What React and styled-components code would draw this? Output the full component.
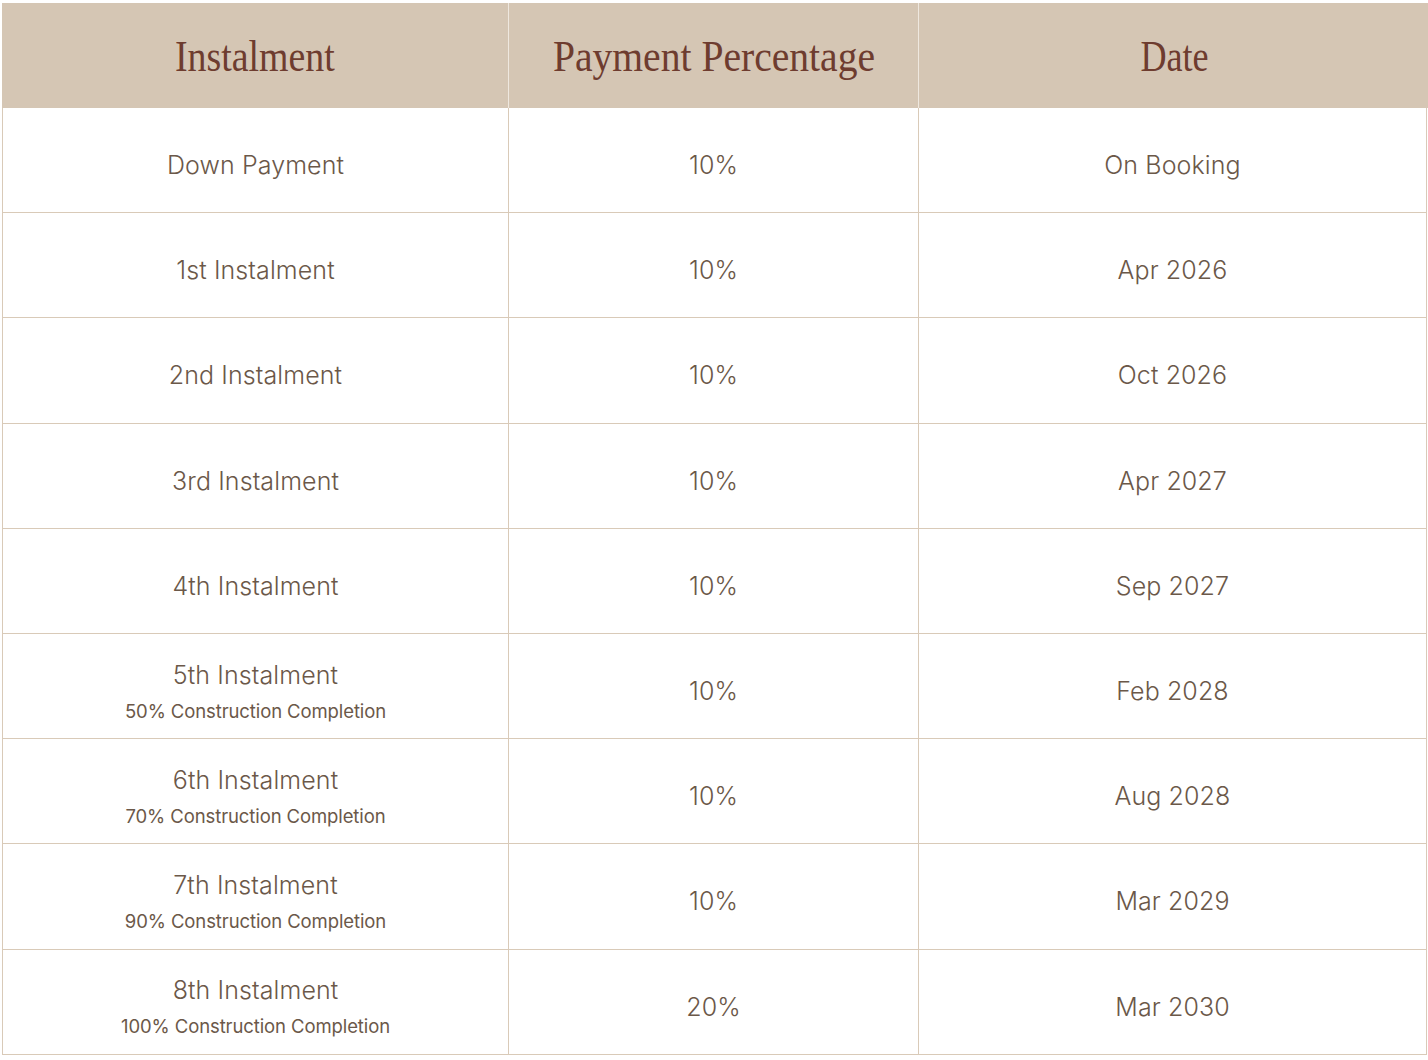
import React from "react";
import styled, { createGlobalStyle } from "styled-components";

const Global = createGlobalStyle`
  html, body { margin: 0; padding: 0; background: #ffffff; }
  body { font-family: Inter, "Noto Sans", sans-serif; }
`;

const Page = styled.div`
  padding: 3px 0 0 2px;
`;

const Table = styled.div`
  display: grid;
  grid-template-columns: 507px 410px 508px;
  width: 1425px;
`;

const HeadCell = styled.div`
  height: 105px;
  background: #d5c6b4;
  display: flex;
  align-items: center;
  justify-content: center;
  box-sizing: border-box;
  border-right: ${(p) => (p.$last ? "none" : "1px solid #efe8df")};
  ${(p) => p.$last && "margin-right: -3px;"}
`;

const HeadText = styled.span`
  display: inline-block;
  font-family: "Liberation Serif", "DejaVu Serif", serif;
  font-size: 44px;
  color: #6e3c2f;
  transform: scaleX(${(p) => p.$sx || 0.86});
  white-space: nowrap;
  margin-top: 2px;
`;

const Cell = styled.div`
  height: 105.2px;
  box-sizing: border-box;
  border-bottom: 1px solid #d9cab8;
  border-right: 1px solid #d9cab8;
  ${(p) => p.$first && "border-left: 1px solid #d9cab8;"}
  display: flex;
  flex-direction: column;
  align-items: center;
  justify-content: center;
  color: #6b5849;
  padding-top: 10px;
`;

const Main = styled.div`
  font-size: 25px;
  font-weight: 300;
  line-height: 30px;
  letter-spacing: 0.1px;
`;

const Sub = styled.div`
  font-size: 18.5px;
  font-weight: 400;
  line-height: 24px;
  margin-top: 9px;
  letter-spacing: -0.1px;
`;

const rows = [
  ["Down Payment", null, "10%", "On Booking"],
  ["1st Instalment", null, "10%", "Apr 2026"],
  ["2nd Instalment", null, "10%", "Oct 2026"],
  ["3rd Instalment", null, "10%", "Apr 2027"],
  ["4th Instalment", null, "10%", "Sep 2027"],
  ["5th Instalment", "50% Construction Completion", "10%", "Feb 2028"],
  ["6th Instalment", "70% Construction Completion", "10%", "Aug 2028"],
  ["7th Instalment", "90% Construction Completion", "10%", "Mar 2029"],
  ["8th Instalment", "100% Construction Completion", "20%", "Mar 2030"],
];

export default function App() {
  return (
    <Page>
      <Global />
      <Table>
        <HeadCell><HeadText $sx={0.86}>Instalment</HeadText></HeadCell>
        <HeadCell><HeadText $sx={0.9}>Payment Percentage</HeadText></HeadCell>
        <HeadCell $last><HeadText $sx={0.82}>Date</HeadText></HeadCell>
        {rows.map(([name, sub, pct, date]) => (
          <React.Fragment key={name}>
            <Cell $first>
              <Main>{name}</Main>
              {sub && <Sub>{sub}</Sub>}
            </Cell>
            <Cell><Main>{pct}</Main></Cell>
            <Cell><Main>{date}</Main></Cell>
          </React.Fragment>
        ))}
      </Table>
    </Page>
  );
}
